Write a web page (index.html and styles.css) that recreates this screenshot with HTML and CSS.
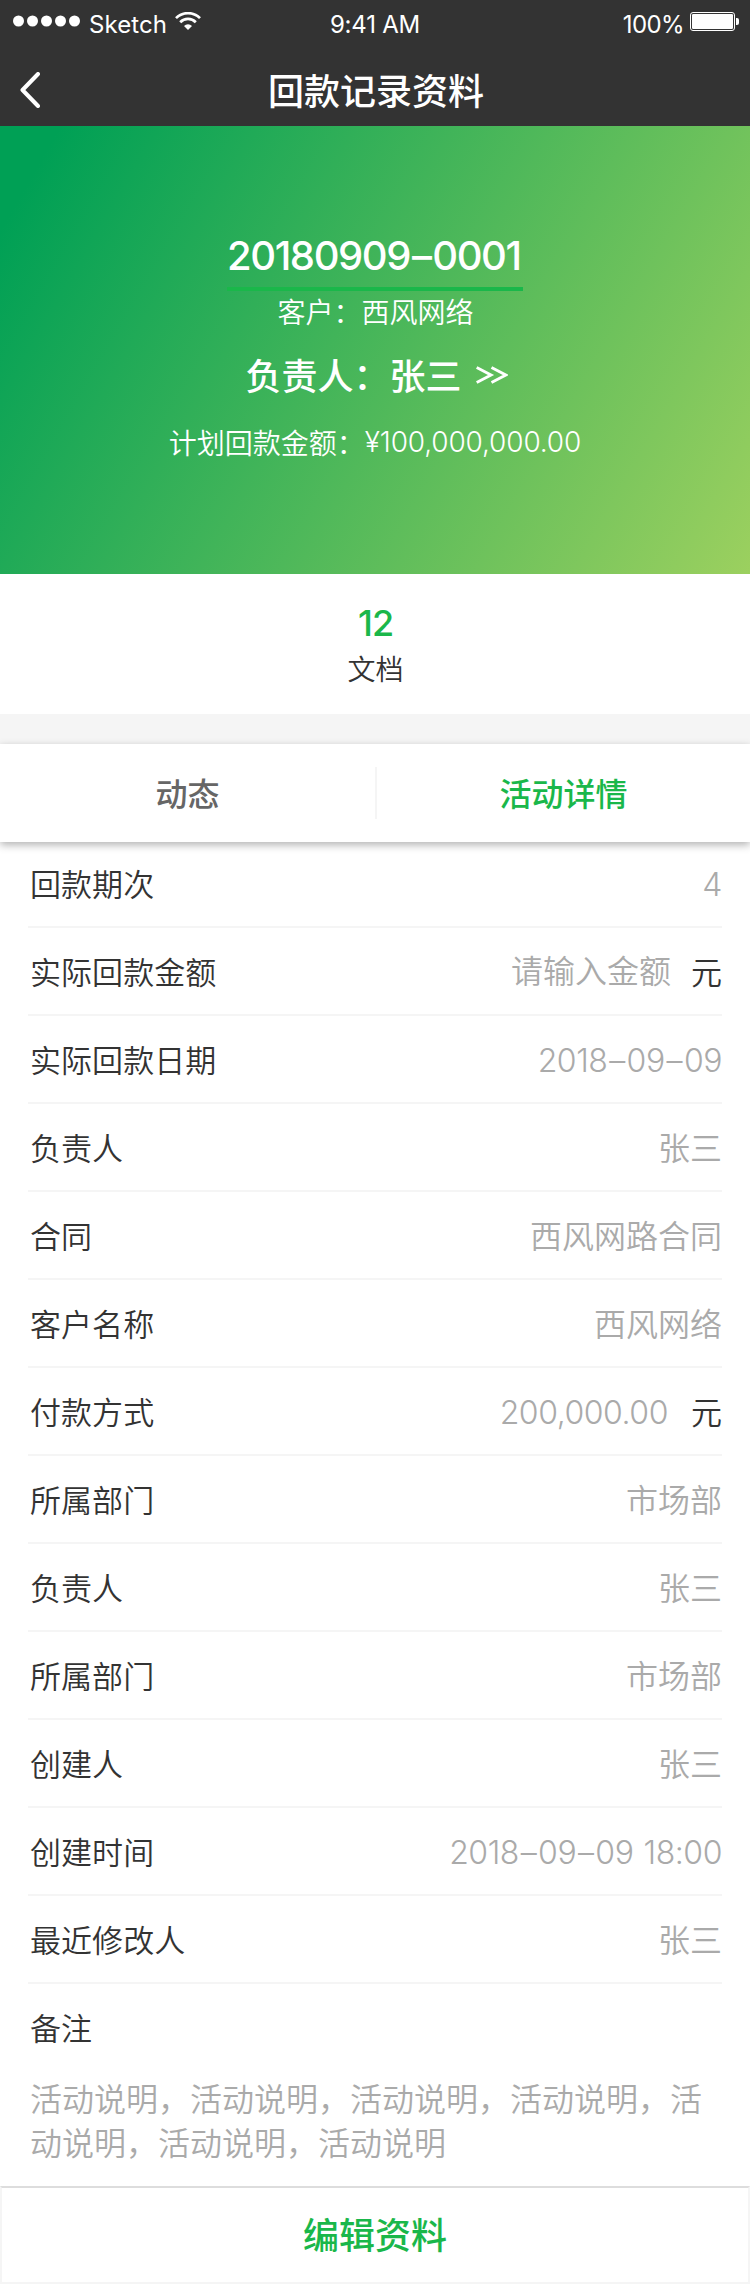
FILE: index.html
```html
<!DOCTYPE html>
<html lang="zh-CN">
<head>
<meta charset="utf-8">
<title>回款记录资料</title>
<link rel="stylesheet" href="styles.css">
</head>
<body>
<div class="page">
  <header class="top">
    <div class="status">
      <div class="carrier">
        <svg class="dots" width="68" height="12" viewBox="0 0 68 12" fill="#fff"><circle cx="5.5" cy="6" r="5.5"/><circle cx="19.5" cy="6" r="5.5"/><circle cx="33.5" cy="6" r="5.5"/><circle cx="47.5" cy="6" r="5.5"/><circle cx="61.5" cy="6" r="5.5"/></svg>
        <span class="carrier-name">Sketch</span>
        <svg class="wifi" width="26" height="18" viewBox="0 0 26 18" fill="none" stroke="#fff" stroke-width="2.7"><path d="M1 6.1a17 17 0 0 1 24 0"/><path d="M5.2 10.2a11 11 0 0 1 15.6 0"/><path d="M13 18l-4-4.1a5.7 5.7 0 0 1 8 0z" fill="#fff" stroke="none"/></svg>
      </div>
      <span class="clock">9:41 AM</span>
      <div class="power">
        <span class="percent">100%</span>
        <svg class="battery" width="49" height="19" viewBox="0 0 49 19"><rect x=".5" y=".5" width="44" height="18" rx="2.5" fill="none" stroke="#fff"/><rect x="2" y="2" width="41" height="15" rx="1.2" fill="#fff"/><path d="M46 6h1q2 0 2 2v3q0 2-2 2h-1z" fill="#fff"/></svg>
      </div>
    </div>
    <div class="nav">
      <svg class="back" width="20" height="36" viewBox="0 0 20 36" fill="none" stroke="#fff" stroke-width="4" stroke-linecap="round" stroke-linejoin="round"><path d="M18 2L2.5 18L18 34"/></svg>
      <h1 class="title">回款记录资料</h1>
    </div>
  </header>
  <section class="hero">
    <div class="code">20180909<span class="dash">–</span>0001</div>
    <div class="customer">客户：西风网络</div>
    <div class="owner"><span>负责人：张三</span><svg class="more" width="32" height="18" viewBox="0 0 32 18" fill="none" stroke="#fff" stroke-width="2.9"><path d="M.7 1.5L15 9L.7 16.5M15.5 1.5L29.8 9L15.5 16.5"/></svg></div>
    <div class="plan"><span>计划回款金额：</span><span class="plan-sum">¥100,000,000.00</span></div>
  </section>
  <section class="docs">
    <div class="docs-count">12</div>
    <div class="docs-label">文档</div>
  </section>
  <nav class="tabs">
    <div class="tab">动态</div>
    <div class="tab tab-active">活动详情</div>
  </nav>
  <main class="list">
    <div class="row"><span class="label">回款期次</span><span class="num">4</span></div>
    <div class="row"><span class="label">实际回款金额</span><span class="value hint">请输入金额</span><span class="unit">元</span></div>
    <div class="row"><span class="label">实际回款日期</span><span class="num">2018<span class="dash">–</span>09<span class="dash">–</span>09</span></div>
    <div class="row"><span class="label">负责人</span><span class="value">张三</span></div>
    <div class="row"><span class="label">合同</span><span class="value">西风网路合同</span></div>
    <div class="row"><span class="label">客户名称</span><span class="value">西风网络</span></div>
    <div class="row"><span class="label">付款方式</span><span class="num sum">200,000.00</span><span class="unit">元</span></div>
    <div class="row"><span class="label">所属部门</span><span class="value">市场部</span></div>
    <div class="row"><span class="label">负责人</span><span class="value">张三</span></div>
    <div class="row"><span class="label">所属部门</span><span class="value">市场部</span></div>
    <div class="row"><span class="label">创建人</span><span class="value">张三</span></div>
    <div class="row"><span class="label">创建时间</span><span class="num date-time">2018<span class="dash">–</span>09<span class="dash">–</span>09 18:00</span></div>
    <div class="row"><span class="label">最近修改人</span><span class="value">张三</span></div>
    <div class="row row-last"><span class="label">备注</span></div>
    <p class="note">活动说明，活动说明，活动说明，活动说明，活动说明，活动说明，活动说明</p>
  </main>
  <footer class="edit">编辑资料</footer>
</div>
</body>
</html>
```
FILE: styles.css
```css
* { box-sizing: border-box; }
body { margin: 0; font-family: "Noto Sans CJK SC", sans-serif; font-weight: 350; color: #333; background: #fff; }
.page { width: 750px; height: 2284px; display: flex; flex-direction: column; overflow: hidden; }
svg { display: block; flex: none; }

.top { flex: none; height: 126px; background: #333; color: #fff; }
.status { height: 40px; display: grid; grid-template-columns: 1fr auto 1fr; font: 400 24px/50px Inter, sans-serif; white-space: nowrap; }
.carrier { display: flex; padding-left: 13px; }
.dots { margin-top: 15px; }
.carrier-name { margin-left: 8px; width: 86px; letter-spacing: .1px; }
.wifi { margin-top: 12px; }
.clock { letter-spacing: -.2px; }
.power { display: flex; justify-content: flex-end; padding-right: 11px; }
.percent { margin-right: 6px; letter-spacing: -.6px; }
.battery { margin-top: 12px; }
.nav { height: 86px; display: grid; grid-template-columns: 40px 1fr 40px; align-items: center; padding: 0 20px; }
.back { align-self: start; margin-top: 32px; }
.title { margin: 0; padding: 11px 0 0 2px; font-size: 36px; line-height: 52px; font-weight: 500; text-align: center; }

.hero { flex: none; height: 448px; padding-top: 101px; background: linear-gradient(120deg, #00a055 6%, #9fd15f 102%); color: #fff; display: flex; flex-direction: column; align-items: center; white-space: nowrap; }
.code { width: 296px; height: 64px; border-bottom: 4px solid #1ab74a; font: 450 40px/58px Inter, sans-serif; letter-spacing: -1.4px; }
.dash { margin: 0 1.8px; }
.customer { padding-left: 1px; font-size: 28px; line-height: 40px; }
.owner { display: flex; align-items: center; gap: 14px; margin-top: 17px; padding-left: 3px; font-size: 36px; line-height: 52px; font-weight: 500; }
.more { margin-top: 2px; }
.plan { display: flex; margin-top: 22px; font-size: 28px; line-height: 40px; }
.plan-sum { font-family: Inter, sans-serif; letter-spacing: -.15px; }

.docs { flex: none; display: flow-root; height: 170px; padding-left: 1px; border-bottom: 30px solid #f5f5f5; text-align: center; }
.docs-count { margin-top: 28px; font: 500 36px/42px Inter, sans-serif; color: #1ab74a; letter-spacing: -1px; }
.docs-label { margin-top: 4px; font-size: 28px; line-height: 40px; color: #333; }

.tabs { position: relative; height: 98px; flex: none; display: grid; grid-template-columns: 1fr 1fr; align-items: center; background: #fff; box-shadow: 0 3px 8px rgba(0, 0, 0, .3); font-size: 32px; font-weight: 500; text-align: center; }
.tab { height: 52px; line-height: 50px; color: #666; }
.tab-active { color: #1ab74a; border-left: 2px solid #f5f5f5; }

.list { flex: 1; padding: 0 28px; }
.row { height: 88px; padding-bottom: 2px; border-bottom: 2px solid #f5f5f5; display: flex; align-items: center; font-size: 31px; }
.row:first-child { margin-top: -2px; }
.row-last { border-bottom: 0; height: 86px; }
.label { flex: 1; padding-left: 2px; letter-spacing: .05px; }
.value, .num { color: #aaa; font-size: 32px; }
.hint { padding-bottom: 2px; }
.num { padding-top: 4px; font-family: Inter, sans-serif; letter-spacing: -.45px; }
.date-time { word-spacing: 1.5px; }
.unit { margin-left: 20px; }
.sum + .unit { margin-left: 23px; }
.note { margin: 0; padding: 5px 0 0 2px; width: 690px; font-size: 32px; line-height: 44px; color: #aaa; }

.edit { flex: none; height: 98px; border: 2px solid #f5f5f5; border-top-color: #ddd; color: #1ab74a; font-size: 36px; font-weight: 500; line-height: 91px; text-align: center; }
```
